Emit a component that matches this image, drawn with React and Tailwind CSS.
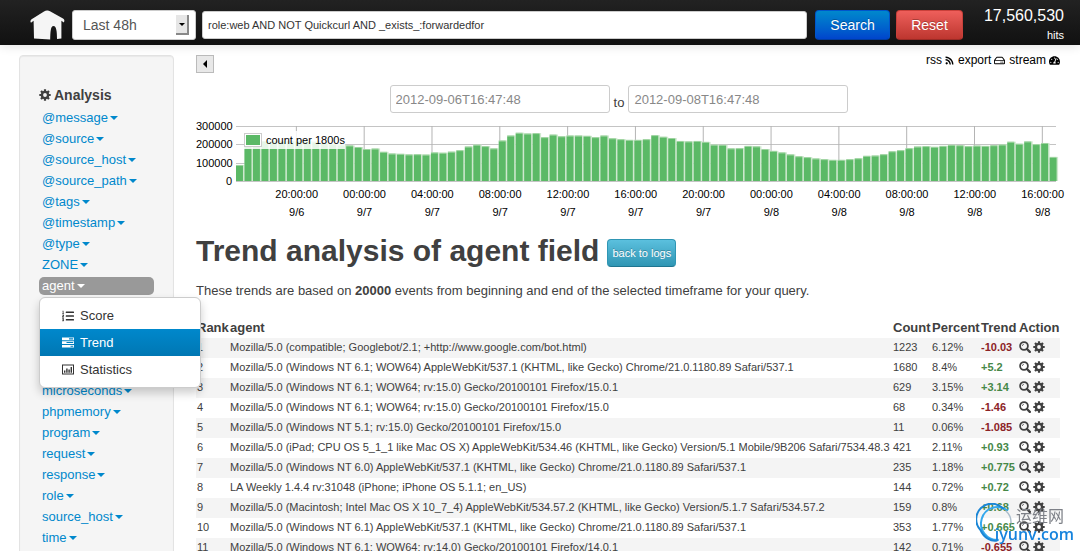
import React, { useState } from 'react';
import { FaRss, FaRegHdd, FaTachometerAlt, FaListOl } from 'react-icons/fa';

const fields = ['@message', '@source', '@source_host', '@source_path', '@tags', '@timestamp', '@type', 'ZONE'];
const moreFields = ['microseconds', 'phpmemory', 'program', 'request', 'response', 'role', 'source_host', 'time'];

// events per 1800s, in thousands
const counts = [
    82, 211, 213, 213, 213, 213, 213, 213, 213, 209, 204, 198, 193, 189, 180, 169, 172, 154, 145, 143,
    140, 141, 139, 151, 149, 155, 163, 183, 193, 185, 173, 216, 243, 258, 254, 256, 234, 248, 239, 243,
    243, 241, 234, 243, 228, 223, 219, 219, 223, 245, 236, 229, 213, 211, 213, 208, 193, 192, 173, 174,
    186, 184, 169, 159, 151, 140, 130, 125, 118, 114, 110, 110, 114, 119, 132, 134, 141, 157, 163, 174,
    183, 185, 181, 186, 192, 190, 185, 188, 186, 190, 194, 209, 198, 211, 196, 202, 126,
];

const ticks = [
    ['20:00:00', '9/6'], ['00:00:00', '9/7'], ['04:00:00', '9/7'], ['08:00:00', '9/7'],
    ['12:00:00', '9/7'], ['16:00:00', '9/7'], ['20:00:00', '9/7'], ['00:00:00', '9/8'],
    ['04:00:00', '9/8'], ['08:00:00', '9/8'], ['12:00:00', '9/8'], ['16:00:00', '9/8'],
];

const rows = [
    ['Mozilla/5.0 (compatible; Googlebot/2.1; +http://www.google.com/bot.html)', '1223', '6.12%', '-10.03'],
    ['Mozilla/5.0 (Windows NT 6.1; WOW64) AppleWebKit/537.1 (KHTML, like Gecko) Chrome/21.0.1180.89 Safari/537.1', '1680', '8.4%', '+5.2'],
    ['Mozilla/5.0 (Windows NT 6.1; WOW64; rv:15.0) Gecko/20100101 Firefox/15.0.1', '629', '3.15%', '+3.14'],
    ['Mozilla/5.0 (Windows NT 6.1; WOW64; rv:15.0) Gecko/20100101 Firefox/15.0', '68', '0.34%', '-1.46'],
    ['Mozilla/5.0 (Windows NT 5.1; rv:15.0) Gecko/20100101 Firefox/15.0', '11', '0.06%', '-1.085'],
    ['Mozilla/5.0 (iPad; CPU OS 5_1_1 like Mac OS X) AppleWebKit/534.46 (KHTML, like Gecko) Version/5.1 Mobile/9B206 Safari/7534.48.3', '421', '2.11%', '+0.93'],
    ['Mozilla/5.0 (Windows NT 6.0) AppleWebKit/537.1 (KHTML, like Gecko) Chrome/21.0.1180.89 Safari/537.1', '235', '1.18%', '+0.775'],
    ['LA Weekly 1.4.4 rv:31048 (iPhone; iPhone OS 5.1.1; en_US)', '144', '0.72%', '+0.72'],
    ['Mozilla/5.0 (Macintosh; Intel Mac OS X 10_7_4) AppleWebKit/534.57.2 (KHTML, like Gecko) Version/5.1.7 Safari/534.57.2', '159', '0.8%', '+0.68'],
    ['Mozilla/5.0 (Windows NT 6.1) AppleWebKit/537.1 (KHTML, like Gecko) Chrome/21.0.1180.89 Safari/537.1', '353', '1.77%', '+0.665'],
    ['Mozilla/5.0 (Windows NT 6.1; WOW64; rv:14.0) Gecko/20100101 Firefox/14.0.1', '142', '0.71%', '-0.655'],
];

function Caret() {
    return (
        <svg viewBox="0 0 8 4" className="w-2 h-1 ml-0.5 shrink-0" fill="currentColor">
            <path d="M0 0h8L4 4z" />
        </svg>
    );
}

function HomeIcon() {
    return (
        <svg viewBox="0 0 35 30" className="w-[35px] h-[30px]" fill="#f5f5f5">
            <path d="M17 0.5C18 0.3 19 0.6 20 1.2L33 8.6C34.5 9.6 34.8 11 33.8 12.6L31.4 10.8V28.6L27 29C27 22 26.5 16 23.5 16C20.5 16 20.4 22 20.2 29.4L4 28.4L3.6 10.8L1 12.8C0 11.4 0.4 10.2 1.6 9.2L14 1.6C15 1 16 0.6 17 0.5Z" />
        </svg>
    );
}

function CogIcon() {
    return (
        <svg viewBox="0 0 12 12" className="w-3 h-3 shrink-0" fill="none" stroke="currentColor">
            <circle cx="6" cy="6" r="3.1" strokeWidth="2.4" />
            <path d="M6 .3v2M6 9.7v2M.3 6h2M9.7 6h2M2 2l1.4 1.4M8.6 8.6L10 10M10 2L8.6 3.4M3.4 8.6L2 10" strokeWidth="2.2" />
        </svg>
    );
}

function ZoomIcon() {
    return (
        <svg viewBox="0 0 12 12" className="w-3 h-3" fill="none" stroke="currentColor">
            <circle cx="5" cy="5" r="3.9" strokeWidth="1.8" />
            <path d="M8 8l2.8 2.8" strokeWidth="2.4" strokeLinecap="round" />
            <path d="M3.4 4.8a1.6 1.6 0 0 1 1.4-1.5" strokeWidth="0.8" />
        </svg>
    );
}

function TasksIcon() {
    return (
        <svg viewBox="0 0 12 11" className="w-3 h-[11px]" fill="currentColor">
            <path fillRule="evenodd" d="M0 .5h12v2.7H0zM7 1.3v1.1h4.2V1.3zM0 4.2h12v2.7H0zM4.5 5v1.1h6.7V5zM0 7.9h12v2.7H0zM8.5 8.7v1.1h2.7V8.7z" />
        </svg>
    );
}

function StatsIcon() {
    return (
        <svg viewBox="0 0 12 11" className="w-3 h-[11px]" fill="currentColor">
            <path fillRule="evenodd" d="M0 .5h12v10H0zM1 1.5v8h10v-8z" />
            <path d="M2 6.5h1.4v2.3H2zM4.2 4.5h1.4v4.3H4.2zM6.4 5.5h1.4v3.3H6.4zM8.6 3h1.4v5.8H8.6z" />
        </svg>
    );
}

function Histogram() {
    const step = 100 / 96.75;
    return (
        <div className="flex mt-1 pr-1 text-[11px] text-black">
            <div className="w-10 h-[73px] pr-1 flex flex-col justify-between text-right leading-[18px]">
                <span>300000</span>
                <span>200000</span>
                <span>100000</span>
                <span>0</span>
            </div>
            <div className="relative flex-1 pt-[9px]">
                <svg className="block w-full h-[100px] overflow-visible">
                    {[0, 18, 37, 55].map((y) => (
                        <rect key={y} x="0" y={y} width="100%" height="1" fill="#c4c4c4" />
                    ))}
                    {ticks.map((t, i) => (
                        <rect key={i} x={`${7.3 + i * 8.27}%`} y="0" width="1" height="55" fill="#b4b4b4" />
                    ))}
                    {counts.map((c, i) => {
                        const h = (c * 55) / 300;
                        return (
                            <g key={i}>
                                <rect x={`${i * step}%`} y={54 - h} width={`${step}%`} height={h + 1} fill="#cfe8cf" />
                                <rect x={`${i * step}%`} y={54 - h} width="0.85%" height="1" fill="#9dd39f" />
                                <rect x={`${i * step}%`} y={55 - h} width="0.85%" height={h} fill="#5bb966" />
                            </g>
                        );
                    })}
                    {ticks.map(([time, day], i) => (
                        <g key={i} textAnchor="middle" fill="#000">
                            <text x={`${7.4 + i * 8.27}%`} y="72">{time}</text>
                            <text x={`${7.4 + i * 8.27}%`} y="90">{day}</text>
                        </g>
                    ))}
                </svg>
                <div className="absolute left-2 top-[14px] flex items-center gap-1 h-[18px] bg-white/85">
                    <span className="w-[18px] h-[14px] p-px border border-[#ccc] bg-white">
                        <span className="block w-full h-full bg-[#5bb966]"></span>
                    </span>
                    <span>count per 1800s</span>
                </div>
            </div>
        </div>
    );
}

export default function App() {
    const [query, setQuery] = useState('role:web AND NOT Quickcurl AND _exists_:forwardedfor');
    const [from, setFrom] = useState('2012-09-06T16:47:48');
    const [to, setTo] = useState('2012-09-08T16:47:48');

    return (
        <div className="min-h-screen bg-white font-['Liberation_Sans',Arial,sans-serif] text-[13px] leading-[18px] text-[#404040]">
            {/* Top bar */}
            <header className="relative flex items-start h-[45px] pl-[30px] pr-4 bg-linear-to-b from-[#222] to-[#111] shadow-[0_1px_10px_rgba(0,0,0,0.12)]">
                <a href="#" aria-label="Home" className="mt-2.5 shrink-0"><HomeIcon /></a>
                <div className="relative mt-2.5 ml-[7px] shrink-0">
                    <select aria-label="Timeframe" className="block appearance-none w-[124px] h-[30px] pl-2.5 rounded-[3px] border border-[#ccc] bg-white text-sm text-[#555]">
                        <option>Last 48h</option>
                    </select>
                    <span className="pointer-events-none absolute right-[7px] top-[5px] w-[13px] h-5 flex items-center justify-center bg-[#e6e6e6] border-r-2 border-b-2 border-[#888]">
                        <svg viewBox="0 0 6 3" className="w-1.5 h-[3px]"><path d="M0 0h6L3 3z" /></svg>
                    </span>
                </div>
                <input
                    aria-label="Query"
                    type="text"
                    className="flex-1 min-w-0 mt-[11px] ml-1.5 h-7 px-[5px] rounded-[3px] border border-[#ccc] bg-white text-[11px] text-[#333]"
                    value={query}
                    onChange={(e) => setQuery(e.target.value)}
                />
                <button type="button" className="mt-2.5 ml-2 w-[75px] h-[30px] rounded-sm border border-[#0055cc] border-b-[#003ca0] bg-linear-to-b from-[#0088cc] to-[#0044cc] text-sm text-white text-shadow-[0_-1px_0_rgba(0,0,0,0.25)]">Search</button>
                <button type="button" className="mt-2.5 ml-1.5 w-[67px] h-[30px] rounded-sm border border-[#c9403a] border-b-[#9a2a25] bg-linear-to-b from-[#ee5f5b] to-[#bd362f] text-sm text-white text-shadow-[0_-1px_0_rgba(0,0,0,0.25)]">Reset</button>
                <div className="w-[101px] pt-1.5 text-right text-white">
                    <div className="text-base leading-5">17,560,530</div>
                    <div className="text-[11px] leading-[18px]">hits</div>
                </div>
            </header>

            <div className="flex items-start pt-2.5 pl-[19px] pr-5">
                {/* Sidebar */}
                <aside className="w-[155px] shrink-0 pt-[29px] px-[19px] pb-5 rounded-sm border border-[#e3e3e3] bg-[#f5f5f5] shadow-[inset_0_1px_1px_rgba(0,0,0,0.05)]">
                    <h2 className="flex items-center gap-[3px] mb-[5px] h-[19px] text-sm font-bold">
                        <CogIcon />Analysis
                    </h2>
                    <ul className="flex flex-col gap-[3px] text-[#0088cc]">
                        {fields.map((f) => (
                            <li key={f}><a href="#" className="flex items-center pl-[3px]">{f}<Caret /></a></li>
                        ))}
                        <li className="relative">
                            <a href="#" className="flex items-center pl-[3px] rounded-[5px] bg-[#999] text-white">agent<Caret /></a>
                            <ul className="absolute left-0 top-full mt-0.5 w-[162px] py-1 rounded-md border border-[#ccc] bg-white text-[#333] shadow-[0_5px_10px_rgba(0,0,0,0.2)] z-10">
                                <li><a href="#" className="flex items-center gap-1.5 h-[27px] pl-[22px]"><FaListOl className="w-3 h-3" />Score</a></li>
                                <li><a href="#" className="flex items-center gap-1.5 h-[27px] pl-[22px] bg-linear-to-b from-[#0088cc] to-[#0077b3] text-white"><TasksIcon />Trend</a></li>
                                <li><a href="#" className="flex items-center gap-1.5 h-[27px] pl-[22px]"><StatsIcon />Statistics</a></li>
                            </ul>
                        </li>
                    </ul>
                    <ul className="flex flex-col gap-[3px] mt-[87px] text-[#0088cc]">
                        {moreFields.map((f) => (
                            <li key={f}><a href="#" className="flex items-center pl-[3px]">{f}<Caret /></a></li>
                        ))}
                    </ul>
                </aside>

                {/* Main */}
                <main className="flex-1 min-w-0 ml-[22px]">
                    <div className="flex items-start justify-between">
                        <button type="button" aria-label="Hide sidebar" className="w-[18px] h-[18px] flex items-center justify-center border border-[#bbb] bg-[#e8e8e8]">
                            <svg viewBox="0 0 4 8" className="w-1 h-2"><path d="M4 0v8L0 4z" /></svg>
                        </button>
                        <nav className="flex items-center gap-1 -mt-1 text-xs leading-[18px] text-black">
                            <a href="#" className="flex items-center gap-[3px]">rss <FaRss className="w-[9px] h-[9px]" /></a>
                            <a href="#" className="flex items-center gap-[3px]">export <FaRegHdd className="w-[11px] h-[11px]" /></a>
                            <a href="#" className="flex items-center gap-[3px]">stream <FaTachometerAlt className="w-[11px] h-[11px]" /></a>
                        </nav>
                    </div>

                    <div className="flex items-center justify-center gap-1 mt-3 pr-[18px]">
                        <input aria-label="From" type="text" className="w-[220px] h-7 px-[5px] rounded-[3px] border border-[#ccc] text-[#888]" value={from} onChange={(e) => setFrom(e.target.value)} />
                        <span className="pt-2">to</span>
                        <input aria-label="To" type="text" className="w-[220px] h-7 px-[5px] rounded-[3px] border border-[#ccc] text-[#888]" value={to} onChange={(e) => setTo(e.target.value)} />
                    </div>

                    <Histogram />

                    <div className="flex items-center gap-2 mt-[7px]">
                        <h1 className="text-[30px] leading-9 font-bold">Trend analysis of agent field</h1>
                        <button type="button" className="h-7 px-1 mt-1 rounded-sm border border-[#2f96b4] border-b-[#1f7590] bg-linear-to-b from-[#5bc0de] to-[#2f96b4] text-[11px] text-white text-shadow-[0_-1px_0_rgba(0,0,0,0.25)]">back to logs</button>
                    </div>
                    <p className="mt-[13px]">These trends are based on <b>20000</b> events from beginning and end of the selected timeframe for your query.</p>

                    <table className="w-full mt-[18px] table-fixed border-collapse text-left text-[11px]">
                        <colgroup>
                            <col className="w-[33px]" />
                            <col />
                            <col className="w-[39px]" />
                            <col className="w-[49px]" />
                            <col className="w-[38px]" />
                            <col className="w-[42px]" />
                        </colgroup>
                        <thead className="text-[13px]">
                            <tr className="h-5">
                                <th className="px-px">Rank</th>
                                <th className="px-px">agent</th>
                                <th className="px-px">Count</th>
                                <th className="px-px">Percent</th>
                                <th className="px-px">Trend</th>
                                <th className="px-px">Action</th>
                            </tr>
                        </thead>
                        <tbody>
                            {rows.map(([agent, count, percent, trend], i) => (
                                <tr key={agent} className="h-5 odd:bg-[#f4f4f4]">
                                    <td className="px-px pb-0.5">{i + 1}</td>
                                    <td className="px-px pb-0.5 whitespace-nowrap">{agent}</td>
                                    <td className="px-px pb-0.5">{count}</td>
                                    <td className="px-px pb-0.5">{percent}</td>
                                    <td className={trend.startsWith('+') ? 'px-px pb-0.5 font-bold text-[#468847]' : 'px-px pb-0.5 font-bold text-[#8c2326]'}>{trend}</td>
                                    <td className="px-px pb-0.5">
                                        <span className="flex items-center gap-0.5">
                                            <a href="#" aria-label="Find"><ZoomIcon /></a>
                                            <a href="#" aria-label="Settings"><CogIcon /></a>
                                        </span>
                                    </td>
                                </tr>
                            ))}
                        </tbody>
                    </table>
                </main>
            </div>

            {/* Site stamp */}
            <div className="pointer-events-none fixed right-1.5 bottom-1 z-20 w-[98px] h-[44px]">
                <svg viewBox="0 0 40 42" className="absolute left-0 top-0 w-10 h-[42px]" fill="none" strokeLinecap="round">
                    <path d="M31 7A16.500 16.500 0 1 0 22 37" stroke="#35a8ec" strokeWidth="2" />
                    <path d="M27 5.500A15.500 15.500 0 0 0 4.500 27C8 35 15 38.500 21 37.500" stroke="#1a86d6" strokeWidth="2" />
                    <path d="M30 8A15 15 0 0 1 35 20" stroke="#a9bccb" strokeWidth="1.500" />
                </svg>
                <span className="absolute right-2.5 top-0.5 font-['Noto_Sans_CJK_SC',sans-serif] text-base leading-5 text-[#7d8087]">运维网</span>
                <span className="absolute right-0 top-[21px] font-['Open_Sans',sans-serif] font-semibold text-base leading-5 text-[#1583dd]">iyunv.com</span>
            </div>
        </div>
    );
}
